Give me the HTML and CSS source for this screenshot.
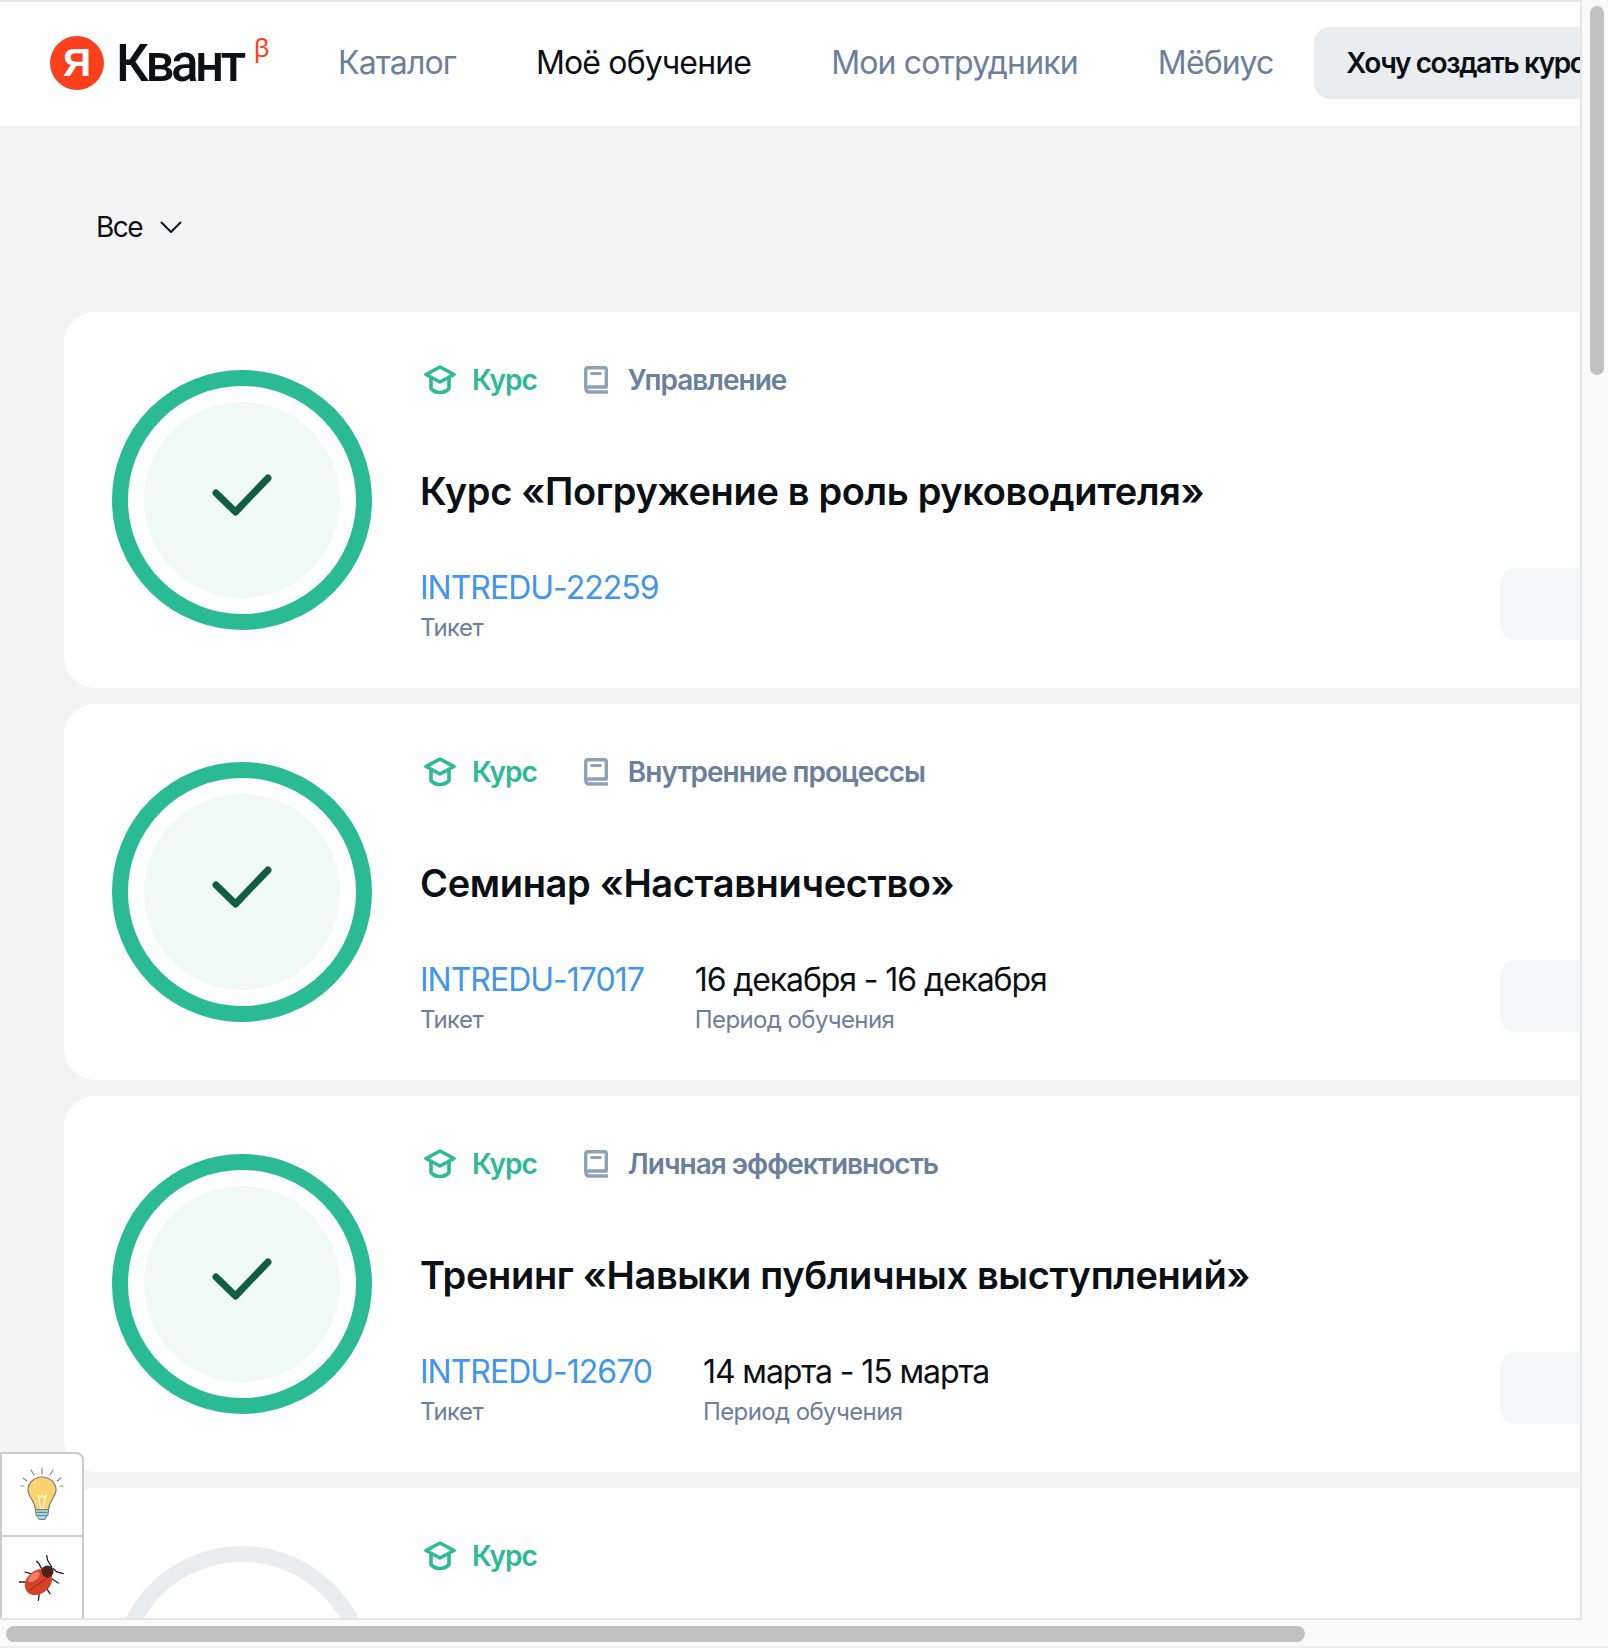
FILE: index.html
```html
<!DOCTYPE html>
<html lang="ru">
<head>
	<meta charset="utf-8">
	<title>Квант</title>
	<link rel="stylesheet" href="styles.css">
</head>
<body>
	<svg class="sprite" width="0" height="0">
		<symbol id="cap" viewBox="0 0 32 30">
			<path d="M16 2 30 9.500 16 17 2 9.500Z M7 13v10.500c2.500 3 5.500 4 9 4s6.500-1 9-4V13" fill="none" stroke="currentColor" stroke-width="3.600" stroke-linejoin="round" stroke-linecap="round"/>
		</symbol>
		<symbol id="book" viewBox="0 0 24 28">
			<path d="M1.700 23V3.700a2 2 0 0 1 2-2h16.600a2 2 0 0 1 2 2V21H4.500a2.500 2.500 0 0 0 0 5H24" fill="none" stroke="#8ca2bb" stroke-width="3.400" stroke-linejoin="round"/>
			<path d="M6.500 7.500h11" stroke="#8ca2bb" stroke-width="3"/>
		</symbol>
		<symbol id="check" viewBox="0 0 64 48">
			<path d="M6 21 25.500 40 58 6" fill="none" stroke="currentColor" stroke-width="7" stroke-linecap="round" stroke-linejoin="round"/>
		</symbol>
	</svg>

	<div class="window">
		<div class="viewport">
			<div class="page">
				<header class="header">
					<a class="logo">
						<span class="logo-mark">Я</span>
						<span class="logo-name">Квант</span>
						<span class="logo-beta">β</span>
					</a>
					<nav class="nav">
						<a class="nav-item">Каталог</a>
						<a class="nav-item nav-item-active">Моё обучение</a>
						<a class="nav-item">Мои сотрудники</a>
						<a class="nav-item">Мёбиус</a>
					</nav>
					<button class="create-btn">Хочу создать курс</button>
				</header>

				<main class="content">
					<div class="filter">
						<span>Все</span>
						<svg class="chevron" viewBox="0 0 22 12"><path d="M1 1 11 11 21 1" fill="none" stroke="currentColor" stroke-width="2"/></svg>
					</div>

					<article class="card">
						<div class="progress progress-done">
							<div class="progress-inner"><svg class="check"><use href="#check"/></svg></div>
						</div>
						<div class="card-body">
							<div class="tags">
								<span class="tag tag-type"><svg class="tag-cap"><use href="#cap"/></svg>Курс</span>
								<span class="tag tag-topic"><svg class="tag-book"><use href="#book"/></svg>Управление</span>
							</div>
							<h2 class="title">Курс «Погружение в роль руководителя»</h2>
							<div class="meta">
								<div class="meta-col">
									<a class="meta-link">INTREDU-22259</a>
									<span class="meta-label">Тикет</span>
								</div>
							</div>
						</div>
						<div class="card-action"></div>
					</article>

					<article class="card">
						<div class="progress progress-done">
							<div class="progress-inner"><svg class="check"><use href="#check"/></svg></div>
						</div>
						<div class="card-body">
							<div class="tags">
								<span class="tag tag-type"><svg class="tag-cap"><use href="#cap"/></svg>Курс</span>
								<span class="tag tag-topic"><svg class="tag-book"><use href="#book"/></svg>Внутренние процессы</span>
							</div>
							<h2 class="title">Семинар «Наставничество»</h2>
							<div class="meta">
								<div class="meta-col">
									<a class="meta-link">INTREDU-17017</a>
									<span class="meta-label">Тикет</span>
								</div>
								<div class="meta-col">
									<span class="meta-value">16 декабря - 16 декабря</span>
									<span class="meta-label">Период обучения</span>
								</div>
							</div>
						</div>
						<div class="card-action"></div>
					</article>

					<article class="card">
						<div class="progress progress-done">
							<div class="progress-inner"><svg class="check"><use href="#check"/></svg></div>
						</div>
						<div class="card-body">
							<div class="tags">
								<span class="tag tag-type"><svg class="tag-cap"><use href="#cap"/></svg>Курс</span>
								<span class="tag tag-topic"><svg class="tag-book"><use href="#book"/></svg>Личная эффективность</span>
							</div>
							<h2 class="title">Тренинг «Навыки публичных выступлений»</h2>
							<div class="meta">
								<div class="meta-col">
									<a class="meta-link">INTREDU-12670</a>
									<span class="meta-label">Тикет</span>
								</div>
								<div class="meta-col">
									<span class="meta-value">14 марта - 15 марта</span>
									<span class="meta-label">Период обучения</span>
								</div>
							</div>
						</div>
						<div class="card-action"></div>
					</article>

					<article class="card">
						<div class="progress"></div>
						<div class="card-body">
							<div class="tags">
								<span class="tag tag-type"><svg class="tag-cap"><use href="#cap"/></svg>Курс</span>
							</div>
						</div>
					</article>
				</main>
			</div>

			<!-- кнопки поверх страницы -->
			<div class="widgets">
				<div class="widget">
					<svg class="bulb-icon" viewBox="0 0 44 56">
						<g stroke="#8a8a8a" stroke-width="1.200" stroke-linecap="round">
							<path d="M22 1v6M11 3l3 5M33 3l-3 5M3 11l4 3M41 11l-4 3M1 19h3M43 19h-3"/>
						</g>
						<path d="M22 10c-7.500 0-14 5.500-14 13 0 7 6.500 9.500 7.500 19.500h13C29.500 32.500 36 30 36 23c0-7.500-6.500-13-14-13Z" fill="#fdd36f" stroke="#7d7d7d" stroke-width="1.200"/>
						<path d="M18 28l3 14M26 28l-3 14M18 28l2 3 2-3 2 3 2-3" fill="none" stroke="#fff" stroke-width="1"/>
						<path d="M15.500 42.500h13v3h-13z" fill="#9bc9cc" stroke="#7d7d7d" stroke-width="1"/>
						<path d="M16 45.500h12v3H16z" fill="#8fe3e8" stroke="#7d7d7d" stroke-width="1"/>
						<path d="M17 48.500h10l-2 4h-6z" fill="#8fe3e8" stroke="#7d7d7d" stroke-width="1"/>
					</svg>
				</div>
				<div class="widget">
					<svg class="bug-icon" viewBox="0 0 46 46">
						<g fill="none" stroke="#1d1d1d" stroke-width="1.300" stroke-linecap="round">
							<path d="M27.700.5 28.500 5 32.700 12M44.300 18.700 38 17 34.300 13.700M17.700 6.300 19.500 8 22.700 13.700M6 17 11.700 18.700M.5 27H7.700M19.300 45.300 20.300 38.700M31 38.700 27.700 33.700M39.300 28 32.700 23.700"/>
						</g>
						<ellipse cx="19.500" cy="27" rx="15" ry="11.500" transform="rotate(-40 19.500 27)" fill="#d6432a"/>
						<path d="M11 35 31 21" stroke="#a5301c" stroke-width="1.200"/>
						<ellipse cx="15" cy="22" rx="7" ry="3.500" transform="rotate(-40 15 22)" fill="#ef7d5f"/>
						<circle cx="28.500" cy="16.500" r="6" fill="#4a2419"/>
					</svg>
				</div>
			</div>
		</div>
		<div class="track-y"><div class="thumb thumb-y"></div></div>
		<div class="track-x"><div class="thumb thumb-x"></div></div>
	</div>
</body>
</html>
```

FILE: styles.css
```css
* {
	padding: 0;
	margin: 0;
	box-sizing: border-box;
}

html,
body {
	width: 1608px;
	height: 1648px;
	overflow: hidden;
	background: #fafafa;
}

body {
	font-family: Inter, "Noto Sans", sans-serif;
	color: #0b1015;
}

.sprite {
	display: block;
	height: 0;
}

/* окно и полосы прокрутки */
.window {
	display: grid;
	grid-template-columns: 1582px 26px;
	grid-template-rows: 1620px 28px;
}

.viewport {
	position: relative;
	overflow: hidden;
	background: #f4f4f5;
	border-top: 2px solid #e6e6e6;
	border-right: 2px solid #e6e6e6;
	border-bottom: 2px solid #e6e6e6;
}

.page {
	width: 2000px;
}

.track-y {
	padding: 6px 4px 0 8px;
}

.track-x {
	grid-column: 1 / 3;
	padding: 6px 0 0 6px;
	border-bottom: 2px solid #efefef;
}

.thumb {
	background: #c1c1c1;
	border-radius: 8px;
}

.thumb-y {
	width: 14px;
	height: 369px;
}

.thumb-x {
	width: 1299px;
	height: 16px;
}

/* шапка */
.header {
	display: flex;
	align-items: center;
	height: 125px;
	padding: 0 0 3px 50px;
	background: #fff;
	border-bottom: 1px solid #f0f0f5;
}

.logo {
	display: flex;
	align-items: center;
	width: 288px;
}

.logo-mark {
	width: 54px;
	height: 54px;
	border-radius: 50%;
	background: #fc3f1d;
	color: #fff;
	font: 700 39px/54px "Liberation Sans", sans-serif;
	text-align: center;
}

.logo-name {
	margin-left: 12px;
	padding-top: 3px;
	font: 500 51px/54px Roboto, sans-serif;
	letter-spacing: -3.400px;
	color: #0b1015;
}

.logo-beta {
	align-self: flex-start;
	margin: -1px 0 0 11px;
	font: 400 26px/28px "Noto Sans", sans-serif;
	color: #fc3f1d;
}

.nav {
	display: flex;
	gap: 80px;
	font-size: 32px;
	letter-spacing: -0.85px;
}

.nav-item {
	color: #6a809c;
}

.nav-item-active {
	color: #0b1015;
}

.create-btn {
	flex: none;
	height: 72px;
	margin-left: 41px;
	padding: 0 32px;
	border: 0;
	border-radius: 16px;
	background: #e9edf0;
	color: #0b1015;
	font: 600 28px Inter, sans-serif;
	letter-spacing: -1.400px;
}

/* список курсов */
.content {
	padding: 0 0 0 64px;
}

.filter {
	display: flex;
	align-items: center;
	gap: 18px;
	height: 185px;
	padding: 14px 0 0 32px;
	font-size: 28px;
	letter-spacing: -1.500px;
}

.chevron {
	width: 22px;
	height: 12px;
}

.card {
	display: flex;
	position: relative;
	height: 376px;
	margin-bottom: 16px;
	padding: 58px 0 0 48px;
	background: #fff;
	border-radius: 32px;
}

.progress {
	flex: none;
	width: 260px;
	height: 260px;
	padding: 32px;
	border: 16px solid #e9edf0;
	border-radius: 50%;
}

.progress-done {
	border-color: #2bba96;
	padding: 16px;
}

.progress-inner {
	display: flex;
	align-items: center;
	justify-content: center;
	width: 196px;
	height: 196px;
	border-radius: 50%;
	background: #eff9f5;
}

.check {
	width: 64px;
	height: 48px;
	margin-top: -8px;
	color: #135c44;
}

.card-body {
	padding: 0 0 0 48px;
	margin-top: -58px;
}

.tags {
	display: flex;
	gap: 47px;
	height: 155px;
	padding-top: 50px;
	font-size: 28px;
	font-weight: 600;
	line-height: 36px;
	letter-spacing: -1px;
}

.tag {
	display: flex;
	align-items: center;
	height: 36px;
}

.tag-type {
	color: #2bba96;
}

.tag-topic {
	color: #6a809c;
}

.tag-cap {
	width: 32px;
	height: 30px;
	margin: 0 16px 0 4px;
}

.tag-book {
	width: 24px;
	height: 28px;
	margin-right: 20px;
}

.title {
	font-size: 38px;
	font-weight: 600;
	line-height: 48px;
	letter-spacing: -0.35px;
}

.meta {
	display: flex;
	gap: 51px;
	margin-top: 53px;
}

.meta-col {
	display: flex;
	flex-direction: column;
	gap: 4px;
}

.meta-link {
	font-size: 32px;
	line-height: 40px;
	letter-spacing: -1px;
	color: #3f96ec;
}

.meta-value {
	font-size: 32px;
	line-height: 40px;
	letter-spacing: -1.100px;
}

.meta-label {
	font-size: 24px;
	line-height: 32px;
	letter-spacing: -0.6px;
	color: #6a809c;
}

.card-action {
	position: absolute;
	left: 1436px;
	top: 256px;
	width: 300px;
	height: 72px;
	border-radius: 16px;
	background: #f5f6f8;
}

/* кнопки снизу слева */
.widgets {
	position: absolute;
	left: 0;
	bottom: 0;
	width: 84px;
	height: 166px;
	background: #fff;
	border: 2px solid #ccc;
	border-bottom: 0;
	border-radius: 0 8px 0 0;
}

.widget {
	display: flex;
	align-items: center;
	justify-content: center;
	height: 81px;
}

.widget + .widget {
	height: 83px;
	border-top: 2px solid #ccc;
}

.bulb-icon {
	width: 44px;
	height: 56px;
}

.bug-icon {
	width: 46px;
	height: 46px;
}
```
